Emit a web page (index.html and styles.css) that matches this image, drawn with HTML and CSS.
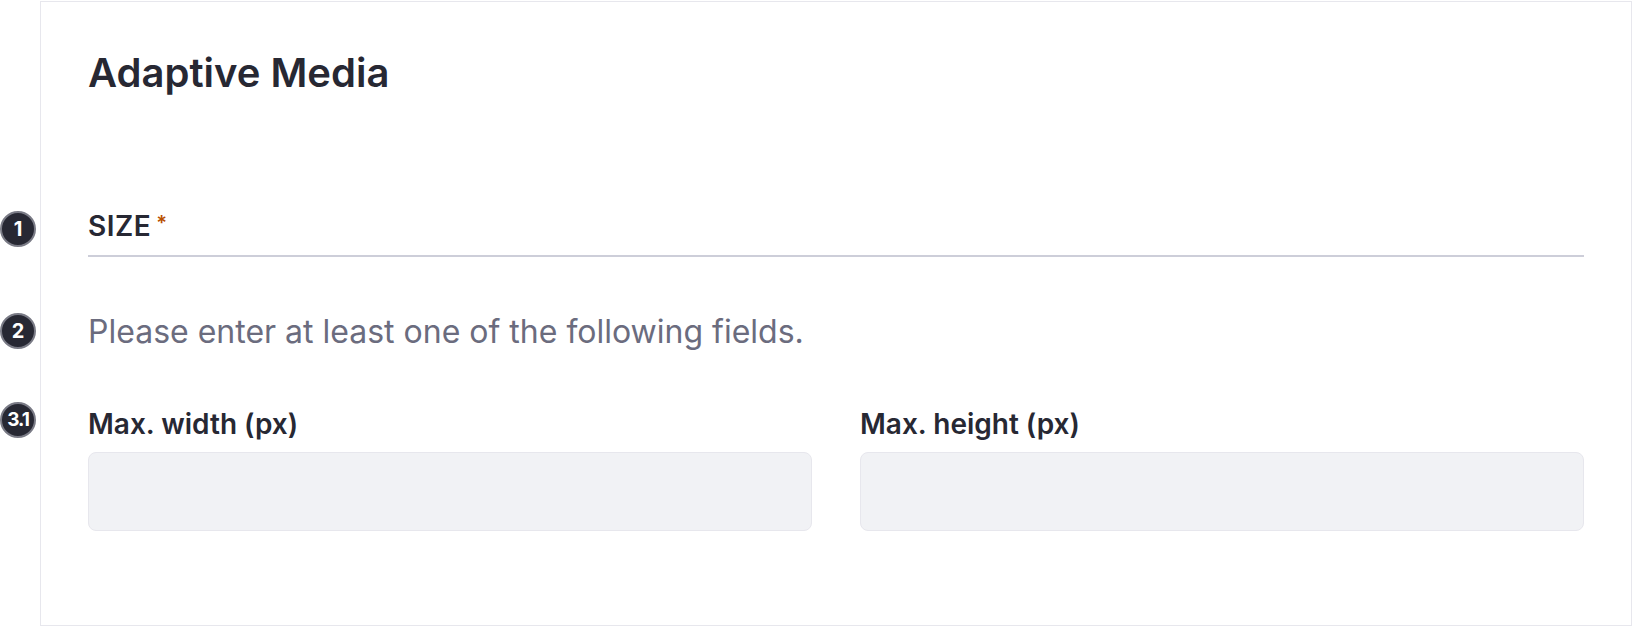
FILE: index.html
```html
<!DOCTYPE html>
<html lang="en">
<head>
<meta charset="utf-8">
<title>Adaptive Media</title>
<link rel="stylesheet" href="styles.css">
</head>
<body>
<div class="sheet">
  <h2 class="sheet-title">Adaptive Media</h2>
  <div class="sheet-subtitle">
    <span class="anno">1</span>
    <span class="subtitle-text">SIZE</span><span class="req">*</span>
  </div>
  <p class="help">
    <span class="anno">2</span>
    Please enter at least one of the following fields.
  </p>
  <div class="fields">
    <div class="field">
      <label class="field-label"><span class="anno anno-wide">3.1</span>Max. width (px)</label>
      <div class="input"></div>
    </div>
    <div class="field">
      <label class="field-label">Max. height (px)</label>
      <div class="input"></div>
    </div>
  </div>
</div>
</body>
</html>
```
FILE: styles.css
```css
html, body {
  margin: 0;
  padding: 0;
  background: #ffffff;
}
body {
  font-family: Inter, "Noto Sans", "Liberation Sans", sans-serif;
  color: #272833;
}
.sheet {
  margin: 1px 0 0 40px;
  border: 1px solid #e7e7ed;
  padding: 47px 47px 94px 47px;
  background: #fff;
}
.sheet-title {
  margin: 0;
  font-size: 40px;
  line-height: 48px;
  font-weight: 600;
  color: #272833;
}
.sheet-subtitle {
  position: relative;
  margin-top: 108px;
  padding-bottom: 11px;
  border-bottom: 2px solid #cdced9;
  font-size: 28px;
  line-height: 36px;
  font-weight: 600;
  letter-spacing: 0.5px;
  color: #272833;
}
.req {
  color: #b95000;
  font-size: 20px;
  vertical-align: 6px;
  margin-left: 5px;
}
.help {
  position: relative;
  margin: 51px 0 0 0;
  font-size: 32px;
  line-height: 48px;
  font-weight: 400;
  color: #6b6c7e;
}
.fields {
  margin-top: 50px;
  display: grid;
  grid-template-columns: 1fr 1fr;
  column-gap: 48px;
}
.field-label {
  position: relative;
  display: block;
  font-size: 28px;
  line-height: 36px;
  font-weight: 600;
  color: #272833;
  margin-bottom: 10px;
}
.input {
  height: 79px;
  box-sizing: border-box;
  background: #f1f2f5;
  border: 1px solid #e7e7ed;
  border-radius: 8px;
}
.anno {
  position: absolute;
  left: -88px;
  top: 50%;
  width: 36px;
  height: 36px;
  margin-top: -19px;
  box-sizing: border-box;
  border-radius: 50%;
  background: #272833;
  border: 2px solid #7a7b86;
  color: #fff;
  font-size: 20px;
  font-weight: 700;
  line-height: 32px;
  text-align: center;
  letter-spacing: 0;
}
.anno-wide {
  margin-top: -22px;
  font-size: 19px;
  letter-spacing: -1px;
}
```
